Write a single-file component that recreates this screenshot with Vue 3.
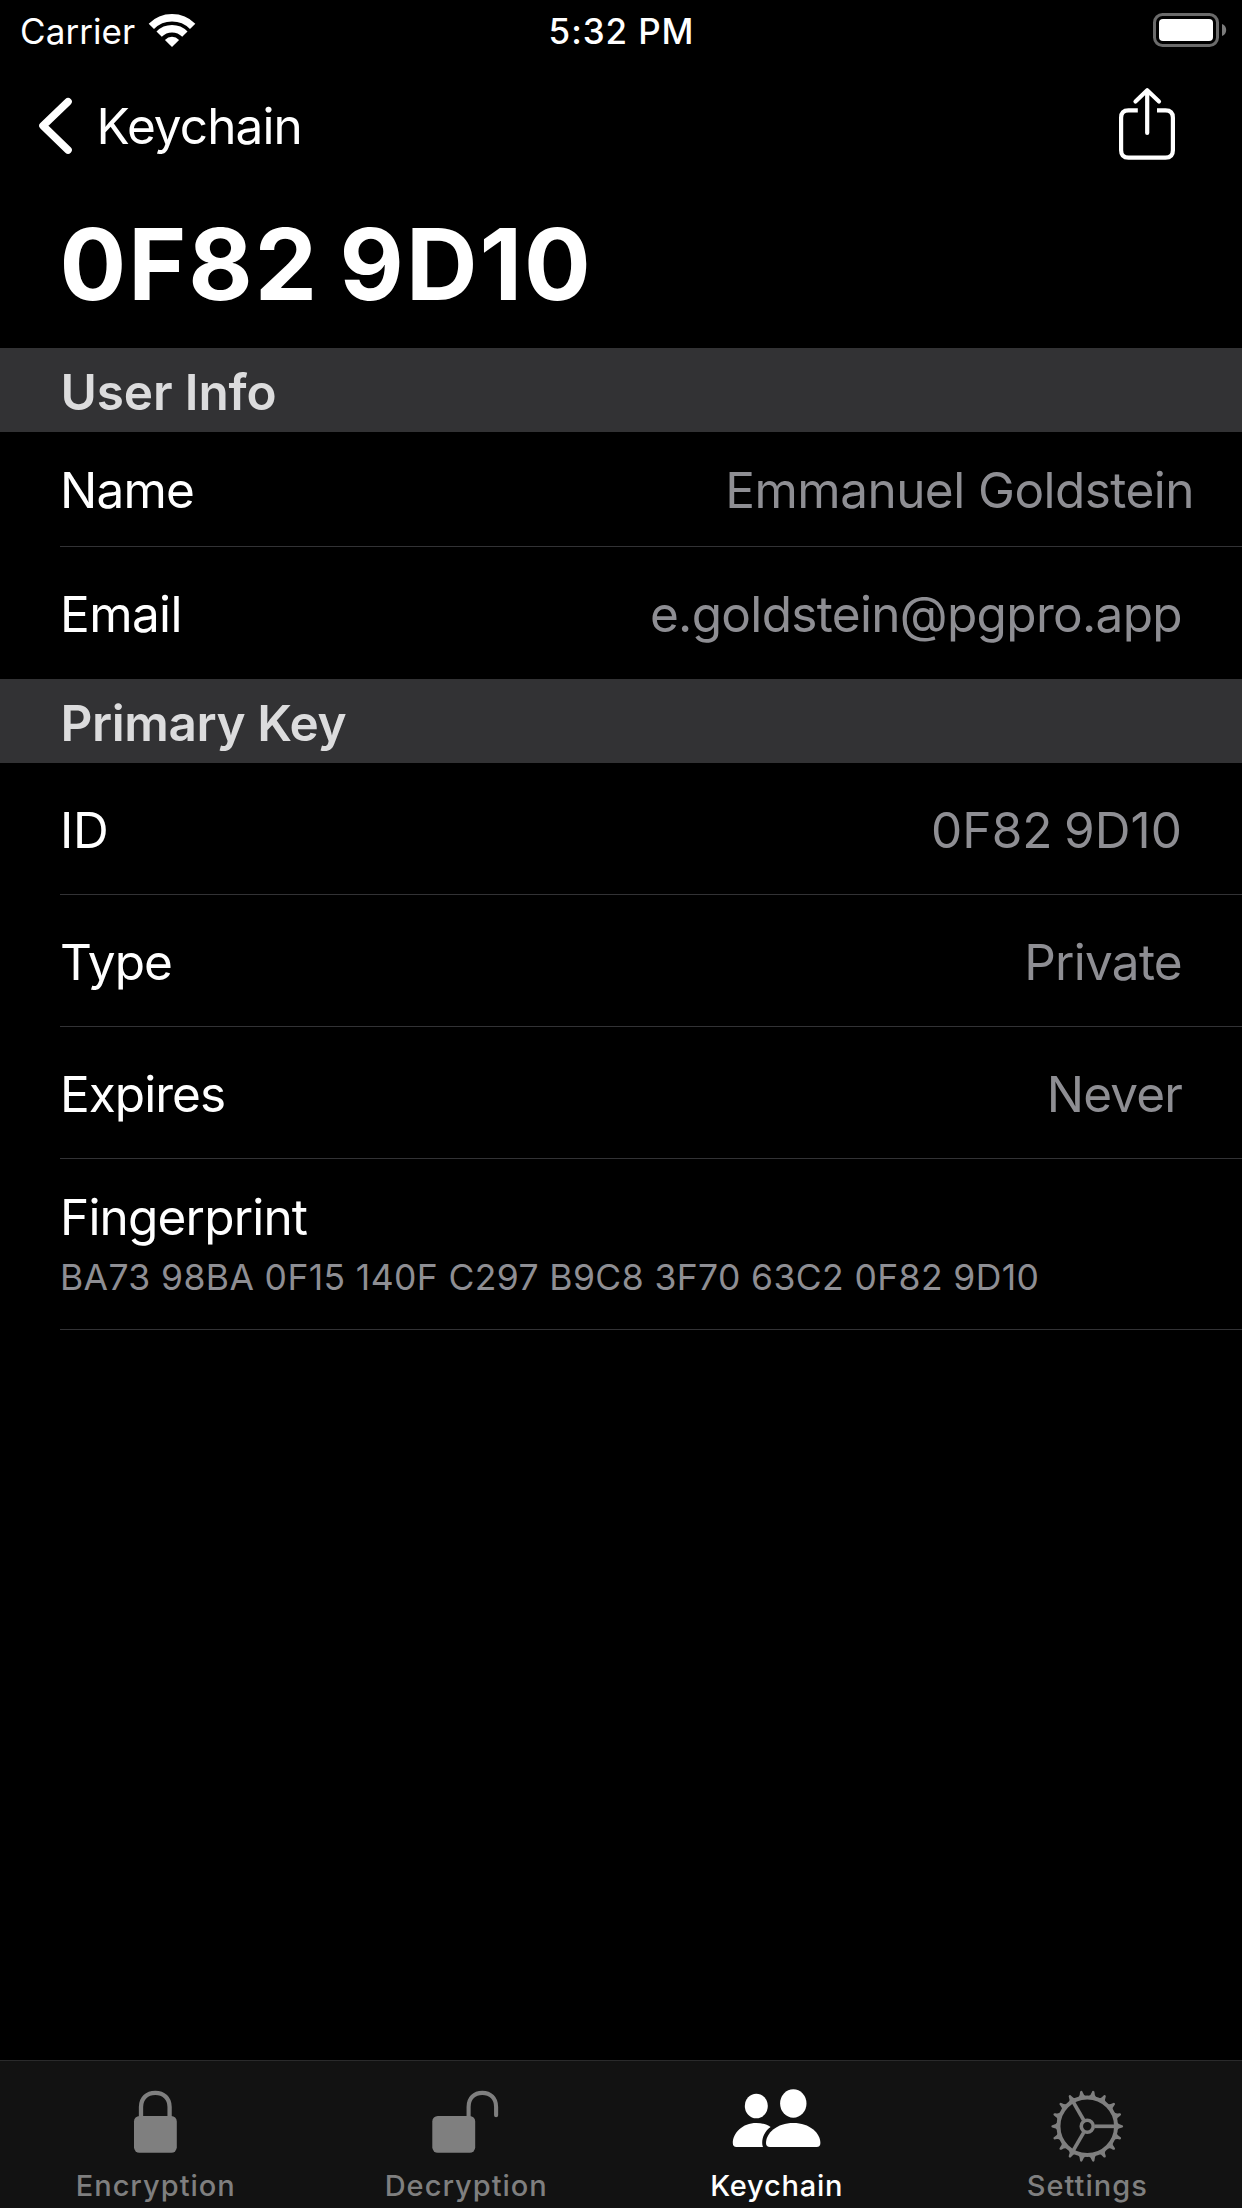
<script setup>
const teeth = Array.from({ length: 18 }, (_, i) => i * 20)

const sections = [
  {
    title: 'User Info',
    tracking: -0.13,
    rows: [
      { label: 'Name', tracking: -0.82, value: 'Emmanuel Goldstein', valueTracking: -0.54, compact: true },
      { label: 'Email', tracking: -0.6, value: 'e.goldstein@pgpro.app', valueTracking: -0.68 },
    ],
  },
  {
    title: 'Primary Key',
    tracking: -0.42,
    rows: [
      { label: 'ID', tracking: -0.29, value: '0F82 9D10', valueTracking: 0.05, numeric: true },
      { label: 'Type', tracking: -1, value: 'Private', valueTracking: -0.74 },
      { label: 'Expires', tracking: -0.96, value: 'Never', valueTracking: -0.85 },
      {
        label: 'Fingerprint',
        tracking: -0.82,
        detail: 'BA73 98BA 0F15 140F C297 B9C8 3F70 63C2 0F82 9D10',
      },
    ],
  },
]

const tabs = [
  { id: 'encrypt', label: 'Encryption' },
  { id: 'decrypt', label: 'Decryption' },
  { id: 'keys', label: 'Keychain', active: true },
  { id: 'settings', label: 'Settings' },
]

const track = (px) => ({ letterSpacing: `${px}px` })
</script>

<template>
  <div class="screen">
    <header class="status">
      <div class="status-left">
        <span class="carrier">Carrier</span>
        <svg class="wifi" width="48" height="36" viewBox="0 0 48 36" fill="none">
          <path d="M3.35 14.35A29.2 29.2 0 0 1 44.65 14.35" stroke="#fff" stroke-width="7.5" />
          <path d="M11.13 22.13A18.2 18.2 0 0 1 36.87 22.13" stroke="#fff" stroke-width="7.5" />
          <path d="M24 35L16.9 27.9Q20 24.7 24 24.7T31.1 27.9Z" fill="#fff" />
        </svg>
      </div>
      <span class="clock">5:32 PM</span>
      <div class="status-right">
        <svg width="74" height="36" viewBox="0 0 74 36" fill="none">
          <rect x="1.5" y="2.5" width="63" height="31" rx="8" stroke="#6b6b6b" stroke-width="3" />
          <rect x="6" y="7" width="54" height="22" rx="4" fill="#fff" />
          <path d="M69 12C72 13 73.2 15.5 73.2 18S72 23 69 24Z" fill="#7b7b7b" />
        </svg>
      </div>
    </header>

    <nav class="nav">
      <div class="back">
        <svg width="36" height="60" viewBox="0 0 36 60" fill="none">
          <path d="M31 5.7L6 29.7L31 54" stroke="#fff" stroke-width="7.6" stroke-linecap="round" stroke-linejoin="round" />
        </svg>
        <span class="back-label">Keychain</span>
      </div>
      <svg class="share" width="60" height="76" viewBox="0 0 60 76" fill="none" stroke="#fff" stroke-width="4.2">
        <path d="M20.8 22.3H11.5Q4.1 22.3 4.1 29.7V62.3Q4.1 69.7 11.5 69.7H48.5Q55.9 69.7 55.9 62.3V29.7Q55.9 22.3 48.5 22.3H40" />
        <path d="M30.2 3V45M18.5 13.5L30.2 2.3L42 13.5" stroke-linecap="round" stroke-linejoin="round" />
      </svg>
    </nav>

    <h1 class="title">0F82 9D10</h1>

    <main class="content">
      <section v-for="section in sections" :key="section.title">
        <h2 class="section-title" :style="track(section.tracking)">{{ section.title }}</h2>
        <div class="rows">
          <div
            v-for="row in section.rows"
            :key="row.label"
            class="row"
            :class="{ compact: row.compact, stacked: row.detail }"
          >
            <span class="label" :style="track(row.tracking)">{{ row.label }}</span>
            <span
              v-if="row.value"
              class="value"
              :class="{ numeric: row.numeric }"
              :style="track(row.valueTracking)"
            >{{ row.value }}</span>
            <span v-if="row.detail" class="detail">{{ row.detail }}</span>
          </div>
        </div>
      </section>
    </main>

    <footer class="tabs">
      <div v-for="tab in tabs" :key="tab.id" class="tab" :class="[tab.id, { active: tab.active }]">
        <svg width="100" height="70" viewBox="0 0 100 70" fill="none">
          <template v-if="tab.id === 'encrypt'">
            <rect x="29" y="31" width="42.8" height="36.8" rx="5.5" fill="currentColor" />
            <path d="M36 33V22C36 13 42 7.9 50.3 7.9S64.6 13 64.6 22V33" stroke="currentColor" stroke-width="4.3" />
          </template>
          <template v-else-if="tab.id === 'decrypt'">
            <rect x="16.3" y="31" width="42.9" height="36.8" rx="5.5" fill="currentColor" />
            <path d="M52.6 33V22C52.6 13 58.3 7.9 66.3 7.9S80.1 13 80.1 22V30.3" stroke="currentColor" stroke-width="4.1" stroke-linecap="round" />
          </template>
          <g v-else-if="tab.id === 'keys'" fill="currentColor">
            <ellipse cx="30.3" cy="21" rx="11.5" ry="12.3" />
            <ellipse cx="67.3" cy="18.5" rx="13.2" ry="14.2" />
            <path d="M10.5 62Q6.8 62 6.8 58C6.8 48 16.5 38 30.3 38C36 38 41 39.5 44.6 42C39 46 36.2 52 36.2 58Q36.2 60.5 37 62Z" />
            <path d="M44 62Q40 62 40 58C40 48 51 38 67.3 38S94.4 48 94.4 58Q94.4 62 90.6 62Z" />
          </g>
          <g v-else stroke="currentColor">
            <circle cx="50.25" cy="41.3" r="28.8" stroke-width="4" />
            <circle cx="50.25" cy="41.3" r="6" stroke-width="3.6" />
            <path
              v-for="a in [0, 120, 240]"
              :key="'s' + a"
              d="M57.5 41.3H79"
              stroke-width="3.7"
              :transform="`rotate(${a} 50.25 41.3)`"
            />
            <path
              v-for="a in teeth"
              :key="'t' + a"
              d="M80 37.3Q81.5 39.6 84.5 39.9Q86.2 40.1 86.2 41.3T84.5 42.7Q81.5 43 80 45.3Z"
              fill="currentColor"
              stroke="none"
              :transform="`rotate(${a} 50.25 41.3)`"
            />
          </g>
        </svg>
        <span class="tab-label">{{ tab.label }}</span>
      </div>
    </footer>
  </div>
</template>

<style>
body {
  margin: 0;
  background: #000;
}
</style>

<style scoped>
.screen {
  display: flex;
  flex-direction: column;
  width: 1242px;
  height: 2208px;
  overflow: hidden;
  background: #000;
  color: #fff;
  font-family: Inter, "Liberation Sans", sans-serif;
  white-space: nowrap;
}

svg {
  display: block;
  flex: none;
  overflow: visible;
}

.status {
  display: grid;
  grid-template-columns: 1fr auto 1fr;
  align-items: center;
  box-sizing: border-box;
  height: 62px;
  padding: 0 15px 1px 20px;
  font-size: 35px;
  line-height: 42px;
}

.status-left {
  display: flex;
  align-items: center;
}

.carrier {
  width: 128px;
  letter-spacing: 0.08px;
}

.wifi {
  margin-top: -2px;
}

.clock {
  font-weight: 500;
  letter-spacing: 0.9px;
  margin-right: 4px;
}

.status-right {
  display: flex;
  justify-content: flex-end;
  margin-top: -1px;
}

.nav {
  display: flex;
  align-items: center;
  justify-content: space-between;
  height: 128px;
  padding: 0 65px 0 37px;
}

.back {
  display: flex;
  align-items: center;
  gap: 23.5px;
}

.back-label {
  font-size: 49.5px;
  line-height: 60px;
  letter-spacing: -0.91px;
}

.title {
  box-sizing: border-box;
  height: 158px;
  margin: 0;
  padding: 14px 59.5px 0;
  font-size: 99px;
  line-height: 120px;
  font-weight: 700;
  letter-spacing: 2px;
  word-spacing: -5px;
}

.section-title {
  box-sizing: border-box;
  height: 84px;
  margin: 0;
  padding: 4px 60px 0 60.5px;
  background: #323234;
  color: #dcdcdd;
  font-size: 49.5px;
  line-height: 80px;
  font-weight: 600;
}

.rows {
  padding-left: 60px;
}

.row {
  display: flex;
  align-items: center;
  justify-content: space-between;
  box-sizing: border-box;
  height: 132px;
  padding: 3px 60px 0 0;
  border-bottom: 1px solid #323235;
  font-size: 49.5px;
  line-height: 60px;
}

.row.compact {
  height: 115px;
  padding: 2px 48px 0 0;
}

section:first-child .row:last-child {
  border-bottom: 0;
  padding-top: 2px;
}

.row.stacked {
  flex-direction: column;
  align-items: flex-start;
  justify-content: flex-start;
  gap: 9px;
  height: 171px;
  padding-top: 28px;
}

.value,
.detail {
  color: #8e8e93;
}

.value.numeric {
  word-spacing: -2.5px;
}

.detail {
  font-size: 35.5px;
  line-height: 44px;
  letter-spacing: 0.38px;
}

.tabs {
  display: flex;
  box-sizing: border-box;
  height: 148px;
  margin-top: auto;
  border-top: 1px solid #2a2a2b;
  background: #121212;
}

.tab {
  display: flex;
  flex: 1;
  flex-direction: column;
  align-items: center;
  gap: 13px;
  padding-top: 24px;
  color: #7f7f7f;
}

.tab.active {
  color: #fff;
}

.tab-label {
  margin-left: 1px;
  font-size: 29px;
  line-height: 35px;
  font-weight: 500;
  letter-spacing: 1px;
}

.tab.keys .tab-label {
  letter-spacing: 0.8px;
}
</style>
